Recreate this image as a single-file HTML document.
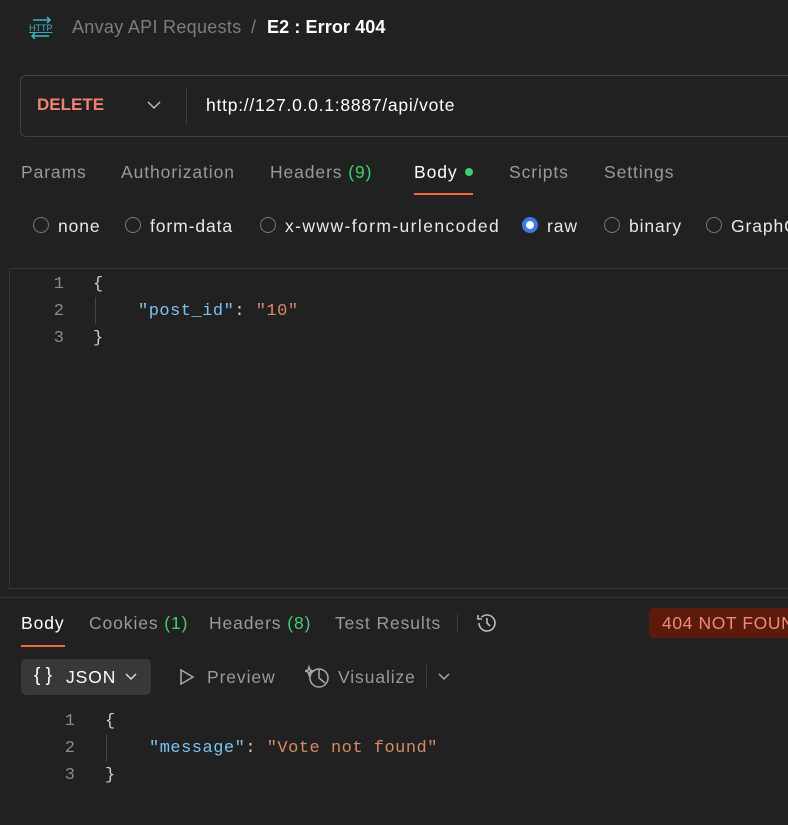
<!DOCTYPE html>
<html><head><meta charset="utf-8"><style>
*{margin:0;padding:0;box-sizing:border-box}
body{width:788px;height:825px;background:#212121;font-family:"Liberation Sans",sans-serif;color:#e8e8e8;position:relative;overflow:hidden}
.a{position:absolute;white-space:nowrap}
.t{font-size:17.5px;line-height:20px;letter-spacing:0.9px}
.g{color:#9a9a9a}
.gr{color:#3fcf6e}
.mono{font-family:"Liberation Mono",monospace;font-size:17px;letter-spacing:0.5px;line-height:20px}
.ln{color:#8a8a8a;text-align:right;width:14px;letter-spacing:0}
.k{color:#7cc3f0}.s{color:#d88a64}.p{color:#cfcfcf}
.rad{width:16px;height:16px;border:1.5px solid #777;border-radius:50%;position:absolute}
</style></head><body>
<svg class="a" style="left:27px;top:16px" width="28" height="24" viewBox="0 0 28 24" fill="none" stroke="#3fb6c8" stroke-width="1.5"><path d="M6 4h17M20 1l3 3-3 3M22 20H5M8 17l-3 3 3 3"/><text x="2" y="15" font-size="9" fill="#3fb6c8" stroke="none" font-family="Liberation Sans" text-decoration="underline">HTTP</text></svg>
<div class="a" style="left:72px;top:17px;font-size:18px;color:#7d7d7d;letter-spacing:0.3px">Anvay API Requests</div>
<div class="a" style="left:251px;top:17px;font-size:18px;color:#7d7d7d">/</div>
<div class="a" style="left:267px;top:17px;font-size:18px;font-weight:bold;color:#fff;letter-spacing:0.1px">E2 : Error 404</div>

<div class="a" style="left:20px;top:75px;width:800px;height:62px;border:1px solid #424242;border-radius:6px"></div>
<div class="a" style="left:37px;top:95px;font-size:17px;font-weight:bold;color:#f0826f">DELETE</div>
<svg class="a" style="left:146px;top:99px" width="16" height="12" viewBox="0 0 16 12" fill="none" stroke="#bbb" stroke-width="1.5"><path d="M2 3l6 6 6-6"/></svg>
<div class="a" style="left:186px;top:88px;width:1px;height:36px;background:#3e3e3e"></div>
<div class="a" style="left:206px;top:95px;font-size:17.5px;color:#fff;letter-spacing:0.75px">http://127.0.0.1:8887/api/vote</div>

<div class="a t g" style="left:21px;top:162px">Params</div>
<div class="a t g" style="left:121px;top:162px">Authorization</div>
<div class="a t g" style="left:270px;top:162px">Headers <span class="gr">(9)</span></div>
<div class="a t" style="left:414px;top:162px;color:#fff">Body</div>
<div class="a" style="left:465px;top:168px;width:8px;height:8px;border-radius:50%;background:#3fcf6e"></div>
<div class="a" style="left:414px;top:193px;width:59px;height:2px;background:#f06a3c"></div>
<div class="a t g" style="left:509px;top:162px">Scripts</div>
<div class="a t g" style="left:604px;top:162px">Settings</div>

<div class="rad" style="left:33px;top:217px"></div><div class="a t" style="left:58px;top:216px">none</div>
<div class="rad" style="left:125px;top:217px"></div><div class="a t" style="left:150px;top:216px">form-data</div>
<div class="rad" style="left:260px;top:217px"></div><div class="a t" style="left:285px;top:216px;letter-spacing:1.4px">x-www-form-urlencoded</div>
<div class="a" style="left:522px;top:217px;width:16px;height:16px;border-radius:50%;background:#3b78e7"><div style="margin:4px;width:8px;height:8px;border-radius:50%;background:#fff"></div></div><div class="a t" style="left:547px;top:216px">raw</div>
<div class="rad" style="left:604px;top:217px"></div><div class="a t" style="left:629px;top:216px">binary</div>
<div class="rad" style="left:706px;top:217px"></div><div class="a t" style="left:731px;top:216px">GraphQL</div>

<div class="a" style="left:9px;top:268px;width:800px;height:321px;border:1px solid #363636;border-right:none"></div>
<div class="a mono ln" style="left:50px;top:275px">1</div>
<div class="a mono ln" style="left:50px;top:302px">2</div>
<div class="a mono ln" style="left:50px;top:329px">3</div>
<div class="a mono p" style="left:93px;top:275px">{</div>
<div class="a" style="left:95px;top:297px;width:1px;height:27px;background:#444"></div>
<div class="a mono" style="left:138px;top:302px"><span class="k">"post_id"</span><span class="p">: </span><span class="s">"10"</span></div>
<div class="a mono p" style="left:93px;top:329px">}</div>

<div class="a" style="left:0;top:597px;width:788px;height:1px;background:#333"></div>
<div class="a t" style="left:21px;top:613px;color:#fff">Body</div>
<div class="a" style="left:21px;top:645px;width:44px;height:2px;background:#f06a3c"></div>
<div class="a t g" style="left:89px;top:613px">Cookies <span class="gr">(1)</span></div>
<div class="a t g" style="left:209px;top:613px">Headers <span class="gr">(8)</span></div>
<div class="a t g" style="left:335px;top:613px">Test Results</div>
<div class="a" style="left:457px;top:613px;width:1px;height:20px;background:#3e3e3e"></div>
<svg class="a" style="left:475px;top:611px" width="24" height="24" viewBox="0 0 24 24" fill="none" stroke="#bbb" stroke-width="1.6"><path d="M4 12a8 8 0 1 0 2.5-5.8M3 4v4h4M12 7v5l3 3"/></svg>
<div class="a" style="left:649px;top:608px;width:150px;height:30px;border-radius:5px;background:#5b1a0c"></div>
<div class="a" style="left:662px;top:613px;font-size:17.5px;color:#f08a74;letter-spacing:0.6px">404 NOT FOUND</div>

<div class="a" style="left:21px;top:659px;width:130px;height:36px;border-radius:5px;background:#383838"></div>
<div class="a" style="left:34px;top:665px;font-size:19px;color:#fff">{ }</div>
<div class="a t" style="left:66px;top:667px;color:#fff">JSON</div>
<svg class="a" style="left:124px;top:671px" width="14" height="12" viewBox="0 0 14 12" fill="none" stroke="#ddd" stroke-width="1.5"><path d="M2 3l5 5 5-5"/></svg>
<svg class="a" style="left:178px;top:668px" width="18" height="18" viewBox="0 0 18 18" fill="none" stroke="#aaa" stroke-width="1.5"><path d="M3 2l12 7-12 7z"/></svg>
<div class="a t g" style="left:207px;top:667px">Preview</div>
<svg class="a" style="left:305px;top:664px" width="26" height="26" viewBox="0 0 26 26" fill="none" stroke="#aaa" stroke-width="1.5"><circle cx="14" cy="14" r="9"/><path d="M14 5v9l6 5M4 3l1 3 3 1-3 1-1 3-1-3-3-1 3-1z"/></svg>
<div class="a t g" style="left:338px;top:667px">Visualize</div>
<div class="a" style="left:426px;top:665px;width:1px;height:24px;background:#3e3e3e"></div>
<svg class="a" style="left:437px;top:671px" width="14" height="12" viewBox="0 0 14 12" fill="none" stroke="#aaa" stroke-width="1.5"><path d="M2 3l5 5 5-5"/></svg>

<div class="a mono ln" style="left:61px;top:712px">1</div>
<div class="a mono ln" style="left:61px;top:739px">2</div>
<div class="a mono ln" style="left:61px;top:766px">3</div>
<div class="a mono p" style="left:105px;top:712px">{</div>
<div class="a" style="left:106px;top:735px;width:1px;height:27px;background:#444"></div>
<div class="a mono" style="left:149px;top:739px"><span class="k">"message"</span><span class="p">: </span><span class="s">"Vote not found"</span></div>
<div class="a mono p" style="left:105px;top:766px">}</div>
</body></html>
